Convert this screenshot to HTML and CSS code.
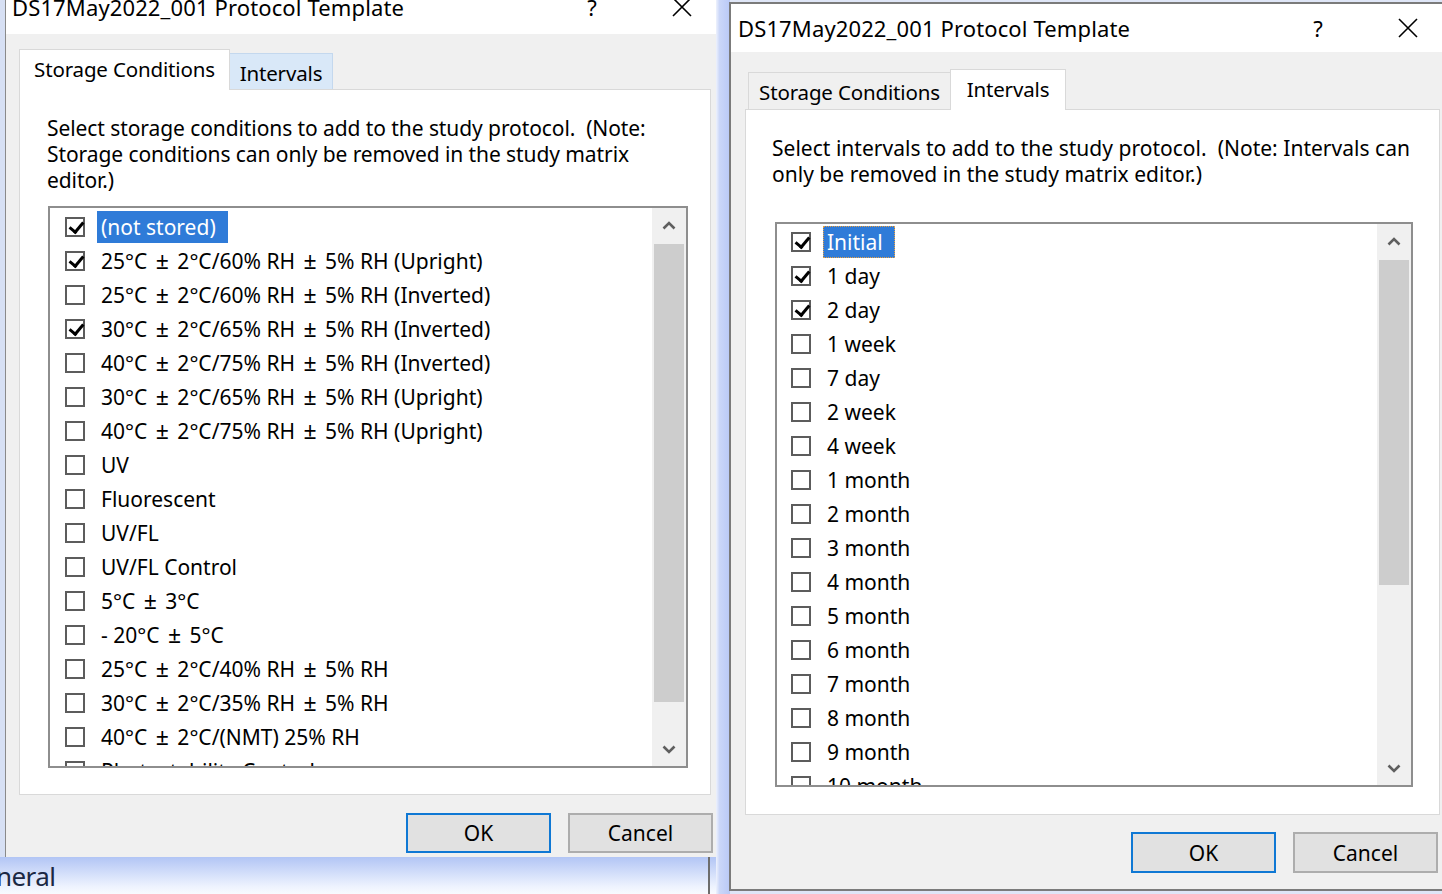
FILE: index.html
```html
<!DOCTYPE html>
<html lang="en">
<head>
<meta charset="utf-8">
<title>Protocol Template</title>
<link rel="stylesheet" href="styles.css">
</head>
<body>
<div class="desk-left"></div>
<div class="desk-gap"></div>
<div class="desk-bottom"><span class="desk-label">neral</span></div>
<div class="desk-line"></div>

<section class="dlg dlg-a">
  <header class="titlebar">
    <span class="title">DS17May2022_001 Protocol Template</span>
    <span class="help">?</span>
    <svg class="close" width="20" height="20" viewBox="0 0 20 20"><path d="M1 1 L19 19 M19 1 L1 19" stroke="#000" stroke-width="1.6" fill="none"/></svg>
  </header>
  <div class="body">
    <div class="tabs">
      <div class="tab active t-storage">Storage Conditions</div>
      <div class="tab hover t-intervals">Intervals</div>
    </div>
    <div class="panel">
      <p class="desc">Select storage conditions to add to the study protocol.&nbsp; (Note:<br>Storage conditions can only be removed in the study matrix<br>editor.)</p>
      <div class="listbox">
        <ul class="items">
          <li class="row"><span class="cb on"></span><span class="lbl sel">(not stored)</span></li>
          <li class="row"><span class="cb on"></span><span class="lbl">25°C <span class="pm">±</span> 2°C/60% RH <span class="pm">±</span> 5% RH (Upright)</span></li>
          <li class="row"><span class="cb"></span><span class="lbl">25°C <span class="pm">±</span> 2°C/60% RH <span class="pm">±</span> 5% RH (Inverted)</span></li>
          <li class="row"><span class="cb on"></span><span class="lbl">30°C <span class="pm">±</span> 2°C/65% RH <span class="pm">±</span> 5% RH (Inverted)</span></li>
          <li class="row"><span class="cb"></span><span class="lbl">40°C <span class="pm">±</span> 2°C/75% RH <span class="pm">±</span> 5% RH (Inverted)</span></li>
          <li class="row"><span class="cb"></span><span class="lbl">30°C <span class="pm">±</span> 2°C/65% RH <span class="pm">±</span> 5% RH (Upright)</span></li>
          <li class="row"><span class="cb"></span><span class="lbl">40°C <span class="pm">±</span> 2°C/75% RH <span class="pm">±</span> 5% RH (Upright)</span></li>
          <li class="row"><span class="cb"></span><span class="lbl">UV</span></li>
          <li class="row"><span class="cb"></span><span class="lbl">Fluorescent</span></li>
          <li class="row"><span class="cb"></span><span class="lbl">UV/FL</span></li>
          <li class="row"><span class="cb"></span><span class="lbl">UV/FL Control</span></li>
          <li class="row"><span class="cb"></span><span class="lbl">5°C <span class="pm">±</span> 3°C</span></li>
          <li class="row"><span class="cb"></span><span class="lbl">- 20°C <span class="pm">±</span> 5°C</span></li>
          <li class="row"><span class="cb"></span><span class="lbl">25°C <span class="pm">±</span> 2°C/40% RH <span class="pm">±</span> 5% RH</span></li>
          <li class="row"><span class="cb"></span><span class="lbl">30°C <span class="pm">±</span> 2°C/35% RH <span class="pm">±</span> 5% RH</span></li>
          <li class="row"><span class="cb"></span><span class="lbl">40°C <span class="pm">±</span> 2°C/(NMT) 25% RH</span></li>
          <li class="row"><span class="cb"></span><span class="lbl">Photostability Control</span></li>
        </ul>
        <div class="scrollbar">
          <div class="arrow"><svg width="14" height="9" viewBox="0 0 14 9"><polyline points="1.5,7.5 7,2 12.5,7.5" stroke="#5f5f5f" stroke-width="2.6" fill="none"/></svg></div>
          <div class="track"><div class="thumb thumb-a"></div></div>
          <div class="arrow"><svg width="14" height="9" viewBox="0 0 14 9"><polyline points="1.5,1.5 7,7 12.5,1.5" stroke="#5f5f5f" stroke-width="2.6" fill="none"/></svg></div>
        </div>
      </div>
    </div>
    <div class="buttons">
      <button class="btn default">OK</button>
      <button class="btn">Cancel</button>
    </div>
  </div>
</section>

<section class="dlg dlg-b">
  <header class="titlebar">
    <span class="title">DS17May2022_001 Protocol Template</span>
    <span class="help">?</span>
    <svg class="close" width="20" height="20" viewBox="0 0 20 20"><path d="M1 1 L19 19 M19 1 L1 19" stroke="#000" stroke-width="1.6" fill="none"/></svg>
  </header>
  <div class="body">
    <div class="tabs">
      <div class="tab t-storage">Storage Conditions</div>
      <div class="tab active t-intervals">Intervals</div>
    </div>
    <div class="panel">
      <p class="desc">Select intervals to add to the study protocol.&nbsp; (Note: Intervals can<br>only be removed in the study matrix editor.)</p>
      <div class="listbox">
        <ul class="items">
          <li class="row"><span class="cb on"></span><span class="lbl sel focus">Initial</span></li>
          <li class="row"><span class="cb on"></span><span class="lbl">1 day</span></li>
          <li class="row"><span class="cb on"></span><span class="lbl">2 day</span></li>
          <li class="row"><span class="cb"></span><span class="lbl">1 week</span></li>
          <li class="row"><span class="cb"></span><span class="lbl">7 day</span></li>
          <li class="row"><span class="cb"></span><span class="lbl">2 week</span></li>
          <li class="row"><span class="cb"></span><span class="lbl">4 week</span></li>
          <li class="row"><span class="cb"></span><span class="lbl">1 month</span></li>
          <li class="row"><span class="cb"></span><span class="lbl">2 month</span></li>
          <li class="row"><span class="cb"></span><span class="lbl">3 month</span></li>
          <li class="row"><span class="cb"></span><span class="lbl">4 month</span></li>
          <li class="row"><span class="cb"></span><span class="lbl">5 month</span></li>
          <li class="row"><span class="cb"></span><span class="lbl">6 month</span></li>
          <li class="row"><span class="cb"></span><span class="lbl">7 month</span></li>
          <li class="row"><span class="cb"></span><span class="lbl">8 month</span></li>
          <li class="row"><span class="cb"></span><span class="lbl">9 month</span></li>
          <li class="row"><span class="cb"></span><span class="lbl">10 month</span></li>
        </ul>
        <div class="scrollbar">
          <div class="arrow"><svg width="14" height="9" viewBox="0 0 14 9"><polyline points="1.5,7.5 7,2 12.5,7.5" stroke="#5f5f5f" stroke-width="2.6" fill="none"/></svg></div>
          <div class="track"><div class="thumb thumb-b"></div></div>
          <div class="arrow"><svg width="14" height="9" viewBox="0 0 14 9"><polyline points="1.5,1.5 7,7 12.5,1.5" stroke="#5f5f5f" stroke-width="2.6" fill="none"/></svg></div>
        </div>
      </div>
    </div>
    <div class="buttons">
      <button class="btn default">OK</button>
      <button class="btn">Cancel</button>
    </div>
  </div>
</section>
</body>
</html>
```

FILE: styles.css
```css
* { box-sizing: border-box; }
html, body { margin: 0; padding: 0; }
body {
  width: 1442px;
  height: 894px;
  overflow: hidden;
  position: relative;
  background: #dfe6f7;
  font-family: "Noto Sans", "Open Sans", sans-serif;
  color: #000;
}

/* desktop / background windows */
.desk-left { position: absolute; left: 0; top: 0; width: 6px; height: 857px; background: #d7e0f4; }
.desk-gap {
  position: absolute; left: 716px; top: 0; width: 14px; height: 894px;
  background: linear-gradient(to right, #eef2fd 0, #cbd7f8 25%, #b9c9f6 100%);
}
.desk-bottom {
  position: absolute; left: 0; top: 857px; width: 716px; height: 37px;
  background: linear-gradient(#b2c5f5, #eef3fe 80%, #f8faff);
  overflow: hidden;
}
.desk-label { position: absolute; left: -4px; top: 1px; font-size: 26px; line-height: 36px; letter-spacing: -0.6px; color: #1b2843; }
.desk-line { position: absolute; left: 708px; top: 857px; width: 2px; height: 37px; background: #6d6d6d; }

/* dialogs */
.dlg {
  position: absolute;
  background: #f0f0f0;
  overflow: hidden;
  display: flex;
  flex-direction: column;
}
.dlg-a { left: 5px; top: -14px; width: 711px; height: 871px; border-left: 1px solid #8a8a8a; }
.dlg-b { left: 729px; top: 2px; width: 718px; height: 889px; border: 2px solid #7b7b7b; }

.titlebar {
  height: 48px;
  flex: none;
  background: #fff;
  display: flex;
  align-items: center;
  padding-left: 6px;
}
.dlg-a .titlebar { padding-bottom: 7px; }
.dlg-b .titlebar { padding-left: 7px; }
.title { flex: 1; font-size: 22px; white-space: nowrap; letter-spacing: 0.13px; }
.help { width: 40px; text-align: center; font-size: 22px; }
.close { margin-left: 60px; margin-right: 24px; flex: none; }
.dlg-b .close { margin-right: 27px; }

.body { flex: 1; display: flex; flex-direction: column; padding: 15px 5px 0 13px; }
.dlg-b .body { padding: 17px 5px 0 14px; }

.tabs { display: flex; align-items: flex-end; height: 40px; position: relative; z-index: 1; }
.dlg-b .tabs { padding-left: 3px; }
.tab {
  height: 37px;
  border: 1px solid #d9d9d9;
  border-bottom: none;
  background: #f0f0f0;
  font-size: 20.5px;
  letter-spacing: -0.15px;
  display: flex;
  align-items: center;
  justify-content: center;
  white-space: nowrap;
}
.tab.hover { background: #d9e8f8; border-color: #c4d8ee; height: 36px; }
.tab.active { height: 41px; margin-bottom: -1px; background: #fff; padding-bottom: 2px; }
.dlg-a .t-storage { width: 211px; }
.dlg-a .t-intervals { width: 103px; border-left: none; padding-top: 2px; }
.dlg-b .t-storage { width: 202px; border-right: none; padding-top: 2px; }
.dlg-b .t-intervals { width: 116px; }

.panel {
  height: 706px;
  flex: none;
  background: #fff;
  border: 1px solid #d9d9d9;
  padding: 25px 0 0 27px;
  display: flex;
  flex-direction: column;
}
.dlg-b .panel { padding-left: 26px; }

.desc { margin: 0; font-size: 21px; line-height: 26px; min-height: 74px; white-space: nowrap; letter-spacing: -0.08px; }
.dlg-b .desc { letter-spacing: 0.02px; }

.listbox {
  margin-top: 13px;
  margin-left: 1px;
  width: 640px;
  height: 562px;
  border: 2px solid #8e8e8e;
  display: flex;
  overflow: hidden;
  background: #fff;
}
.dlg-b .listbox { margin-left: 3px; width: 638px; height: 565px; }

.items { flex: 1; list-style: none; margin: 0; padding: 3px 0 0 15px; overflow: hidden; }
.dlg-b .items { padding: 2px 0 0 14px; }
.row { height: 34px; display: flex; align-items: flex-start; }
.cb {
  flex: none;
  width: 20px;
  height: 20px;
  margin-top: 6px;
  border: 2px solid #5c5c5c;
  background: #fff;
  position: relative;
}
.cb.on::after {
  content: "";
  position: absolute;
  left: 5px;
  top: 0px;
  width: 6px;
  height: 11px;
  border-right: 3px solid #000;
  border-bottom: 3px solid #000;
  transform: rotate(40deg);
}
.lbl {
  margin-left: 12px;
  padding: 0 12px 0 4px;
  height: 32px;
  line-height: 32px;
  font-size: 21px;
  white-space: nowrap;
}
.pm { display: inline-block; padding: 0 3px; font-size: 23px; line-height: 20px; }
.lbl.sel { background: #2f7bd8; color: #fff; }
.lbl.focus { outline: 1px dotted #e8a040; outline-offset: -1px; }

.scrollbar { flex: none; width: 34px; display: flex; flex-direction: column; background: #f0f0f0; }
.arrow { height: 34px; flex: none; display: flex; align-items: center; justify-content: center; }
.track { flex: 1; padding: 2px 2px 0; }
.thumb { background: #cdcdcd; }
.thumb-a { height: 458px; }
.thumb-b { height: 325px; }

.buttons { display: flex; justify-content: flex-end; gap: 17px; margin-top: 18px; margin-right: -2px; }
.dlg-b .buttons { margin-top: 17px; margin-right: 2px; }
.btn {
  width: 145px;
  height: 40px;
  background: #e1e1e1;
  border: 2px solid #adadad;
  font-family: inherit;
  font-size: 21px;
  color: #000;
  padding: 0;
}
.dlg-b .btn { height: 41px; }
.btn.default { border-color: #0f78d4; }
```
